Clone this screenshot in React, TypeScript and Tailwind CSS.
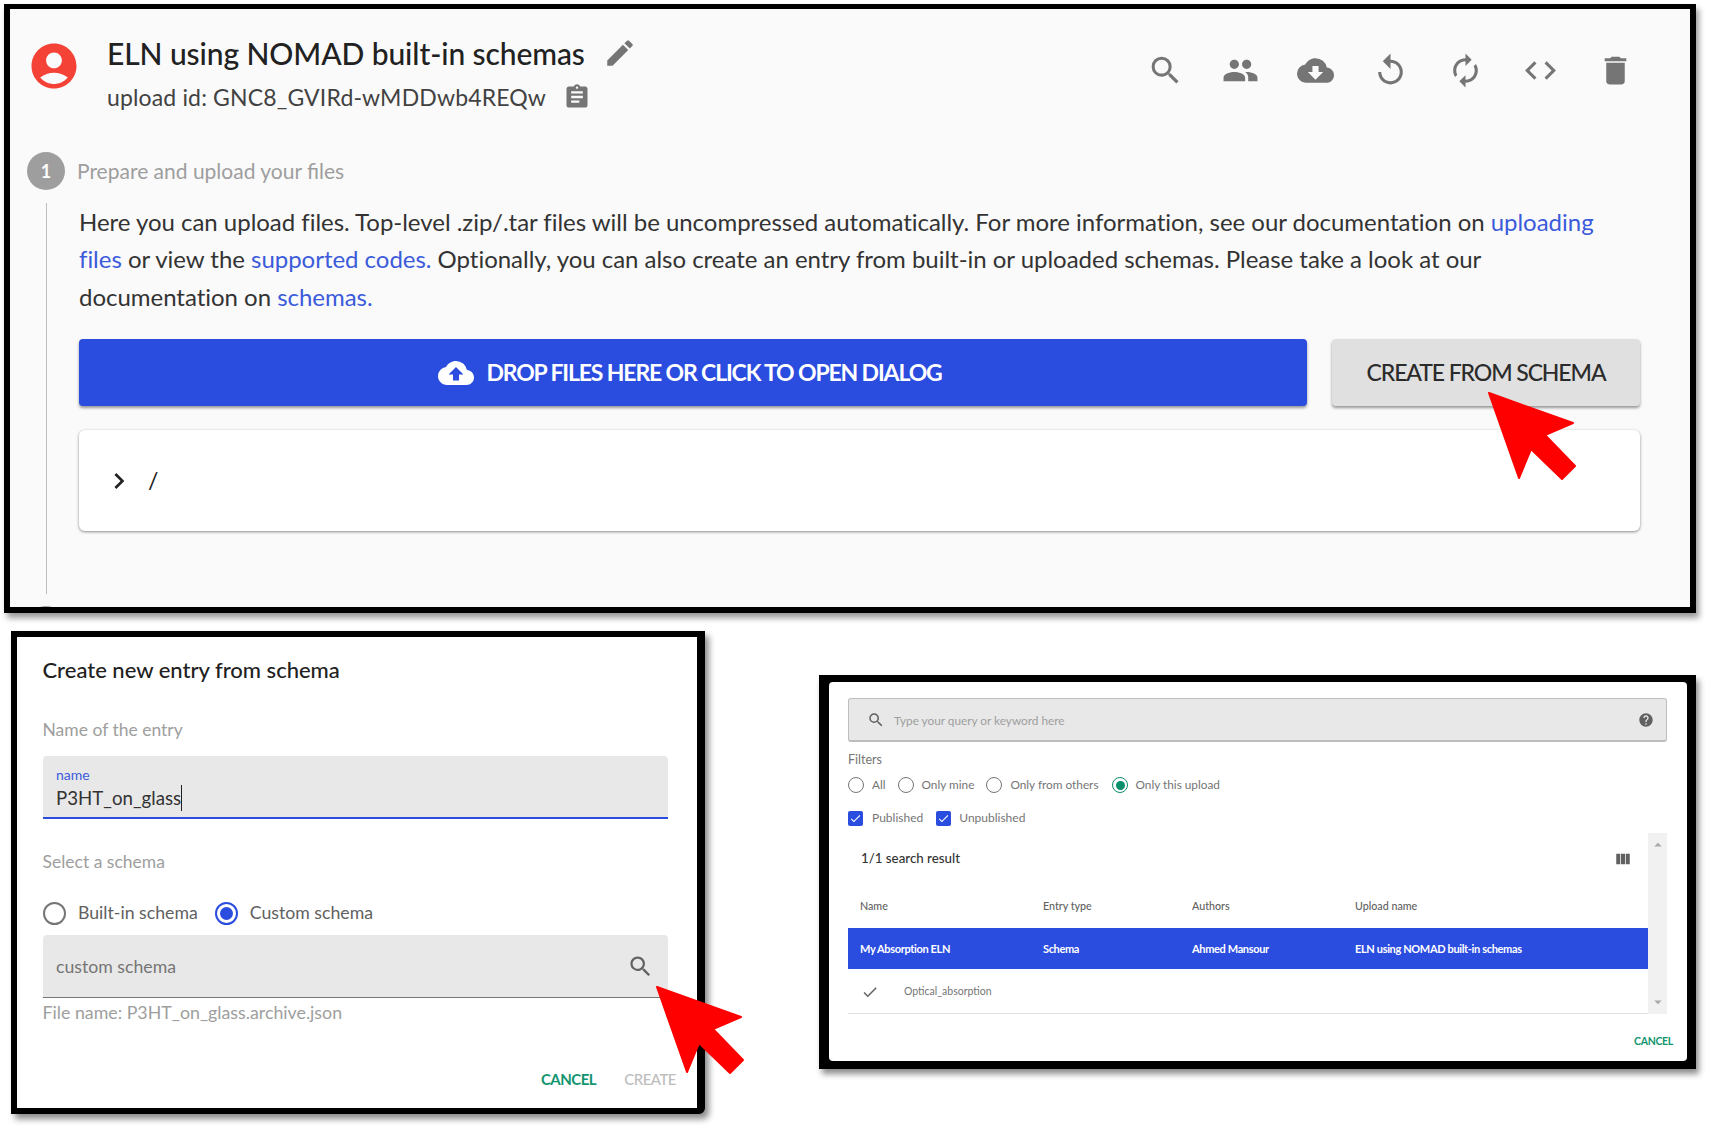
import React from 'react';
import {
  MdAccountCircle,
  MdAssignment,
  MdAutorenew,
  MdCheck,
  MdChevronRight,
  MdCloudDownload,
  MdCloudUpload,
  MdCode,
  MdDelete,
  MdEdit,
  MdHelp,
  MdPeople,
  MdReplay,
  MdSearch,
  MdViewColumn,
  MdArrowDropDown,
  MdArrowDropUp,
} from 'react-icons/md';

const toolbar = [MdSearch, MdPeople, MdCloudDownload, MdReplay, MdAutorenew, MdCode, MdDelete];

const Arrow = ({ className }: { className: string }) => (
  <svg className={`absolute ${className}`} width="92" height="92" viewBox="-3 -3 92 92">
    <path d="M0 0L84 30L56 42L86 73L73 86L42 56L30 85Z" fill="#ff0000" stroke="#ff0000" strokeWidth="2" strokeLinejoin="round" />
  </svg>
);

const BigRadio = ({ on }: { on?: boolean }) => (
  <span className={`flex h-[23px] w-[23px] items-center justify-center rounded-full border-2 ${on ? 'border-[#2a4cdf]' : 'border-[#757575]'}`}>
    {on && <span className="h-[13px] w-[13px] rounded-full bg-[#2a4cdf]" />}
  </span>
);

const SmallRadio = ({ on }: { on?: boolean }) => (
  <span className={`flex h-[16px] w-[16px] items-center justify-center rounded-full border ${on ? 'border-[#0a8f6c]' : 'border-[#757575]'}`}>
    {on && <span className="h-[9px] w-[9px] rounded-full bg-[#0a8f6c]" />}
  </span>
);

const Check = () => (
  <span className="flex h-[15px] w-[15px] items-center justify-center rounded-[2px] bg-[#2a4cdf]">
    <MdCheck className="text-white" size={13} />
  </span>
);

export default function App() {
  return (
    <div className="flex h-[1127px] w-[1709px] flex-col overflow-hidden bg-white pl-[4px] pr-[13px] pt-[4px] font-['Lato',sans-serif] text-[#212121]">
      {/* upload page */}
      <div className="relative h-[609px] w-[1692px] shrink-0 overflow-hidden border-[6px] border-t-[5px] border-black bg-[#fafafa] shadow-[3px_5px_6px_rgba(0,0,0,0.4)]">
        <div className="flex pl-[17px] pr-[56px] pt-[22px]">
          <MdAccountCircle size={54} className="mt-[8px] shrink-0 text-[#f44336]" />
          <div className="ml-[26px]">
            <div className="flex h-[44px] items-center">
              <span className="text-[30px] font-medium tracking-[-0.1px]">ELN using NOMAD built-in schemas</span>
              <MdEdit size={34} className="ml-[18px] text-[#757575]" />
            </div>
            <div className="flex h-[44px] items-center">
              <span className="text-[23px] tracking-[0.15px] text-[#424242]">upload id: GNC8_GVIRd-wMDDwb4REQw</span>
              <MdAssignment size={28} className="ml-[17px] text-[#757575]" />
            </div>
          </div>
          <div className="ml-auto mt-[21px] flex h-[38px] gap-[38px]">
            {toolbar.map((Icon, i) => (
              <Icon key={i} size={37} className="text-[#757575]" />
            ))}
          </div>
        </div>

        <div className="mt-[33px] flex items-center pl-[17px]">
          <span className="flex h-[38px] w-[38px] items-center justify-center rounded-full bg-[#9e9e9e] text-[18px] font-bold text-white">1</span>
          <span className="ml-[12px] text-[21px] text-[#9e9e9e]">Prepare and upload your files</span>
        </div>

        <div className="ml-[36px] mr-[50px] mt-[13px] h-[391px] border-l border-[#bdbdbd] pl-[32px]">
          <p className="text-[24px] leading-[37.4px] tracking-[-0.025px] text-[#333333]">
            Here you can upload files. Top-level .zip/.tar files will be uncompressed automatically. For more information, see our documentation on <a className="text-[#3b5bdb]">uploading</a>
            <br />
            <a className="text-[#3b5bdb]">files</a> or view the <a className="text-[#3b5bdb]">supported codes.</a> Optionally, you can also create an entry from built-in or uploaded schemas. Please take a look at our
            <br />
            documentation on <a className="text-[#3b5bdb]">schemas.</a>
          </p>
          <div className="mt-[24px] flex gap-[25px]">
            <div className="flex h-[67px] w-[1228px] items-center justify-center gap-[12px] rounded-[4px] bg-[#2a4cdf] pr-[6px] text-[23px] font-bold tracking-[-1.15px] text-white shadow-[0_2px_3px_rgba(0,0,0,0.4)]">
              <MdCloudUpload size={36} />
              DROP FILES HERE OR CLICK TO OPEN DIALOG
            </div>
            <div className="flex h-[67px] w-[308px] items-center justify-center rounded-[4px] bg-[#e0e0e0] text-[23px] font-medium tracking-[-1.1px] text-[#2b2b2b] shadow-[0_2px_3px_rgba(0,0,0,0.4)]">
              CREATE FROM SCHEMA
            </div>
          </div>
          <div className="mt-[24px] flex h-[101px] items-center rounded-[6px] bg-white pl-[24px] shadow-[0_1px_3px_rgba(0,0,0,0.45)]">
            <MdChevronRight size={32} className="text-[#212121]" />
            <span className="ml-[13px] text-[23px]">/</span>
          </div>
        </div>
        <div className="ml-[17px] mt-[12px] h-[38px] w-[38px] rounded-full bg-[#9e9e9e]" />
      </div>

      <div className="mt-[18px] flex items-start pl-[7px]">
        {/* create entry dialog */}
        <div className="h-[483px] w-[694px] shrink-0 rounded-br-[6px] border-[6px] border-r-[8px] border-black bg-white pl-[26px] pr-[21px] pt-[18px] shadow-[4px_5px_6px_rgba(0,0,0,0.45)]">
          <div className="-ml-[0.5px] text-[22px] font-medium leading-[30px]">Create new entry from schema</div>
          <div className="-ml-[0.5px] mt-[31px] text-[17.5px] leading-[28px] text-[#9e9e9e]">Name of the entry</div>
          <div className="mt-[12px] h-[63px] w-[625px] rounded-t-[4px] border-b-2 border-[#2a4cdf] bg-[#e8e8e8] pl-[13px] pt-[11px]">
            <div className="text-[14px] leading-[16px] text-[#3b5bdb]">name</div>
            <div className="mt-[2px] flex items-center text-[18.7px] leading-[24px] text-[#333333]">
              P3HT_on_glass
              <span className="h-[26px] w-px bg-[#212121]" />
            </div>
          </div>
          <div className="-ml-[0.5px] mt-[29px] text-[17.5px] leading-[28px] text-[#9e9e9e]">Select a schema</div>
          <div className="mt-[23px] flex h-[28px] items-center text-[17.7px] text-[#616161]">
            <BigRadio />
            <span className="ml-[12px]">Built-in schema</span>
            <span className="ml-[17px]">
              <BigRadio on />
            </span>
            <span className="ml-[12px]">Custom schema</span>
          </div>
          <div className="mt-[8px] flex h-[63px] w-[625px] items-center justify-between rounded-t-[4px] border-b border-[#757575] bg-[#e8e8e8] pl-[13px] pr-[14px]">
            <span className="mt-[3px] text-[17.7px] text-[#757575]">custom schema</span>
            <MdSearch size={27} className="text-[#616161]" />
          </div>
          <div className="-ml-[0.5px] mt-[1px] text-[17.8px] leading-[26px] text-[#9e9e9e]">File name: P3HT_on_glass.archive.json</div>
          <div className="mt-[42px] flex justify-end gap-[28px] text-[15px] font-bold leading-[24px] tracking-[-0.5px]">
            <span className="text-[#12946f]">CANCEL</span>
            <span className="font-medium text-[#bdbdbd]">CREATE</span>
          </div>
        </div>

        {/* schema search dialog */}
        <div className="ml-auto mt-[44px] h-[394px] w-[877px] shrink-0 border-[10px] border-b-[8px] border-r-[9px] border-t-[7px] border-black bg-black shadow-[3px_5px_6px_rgba(0,0,0,0.45)]">
          <div className="h-full rounded-[4px] bg-white pl-[19px] pr-[20px] pt-[16px]">
            <div className="flex h-[44px] items-center rounded-[3px] border border-b-2 border-[#bdbdbd] bg-[#e8e8e8] pl-[18px] pr-[12px]">
              <MdSearch size={18} className="text-[#616161]" />
              <span className="ml-[9px] mt-[2px] text-[11.8px] text-[#9e9e9e]">Type your query or keyword here</span>
              <MdHelp size={16} className="ml-auto text-[#616161]" />
            </div>
            <div className="mt-[9px] text-[12.5px] leading-[18px] text-[#757575]">Filters</div>
            <div className="mt-[6px] flex h-[20px] items-center text-[11.8px] text-[#757575]">
              <SmallRadio />
              <span className="ml-[8px]">All</span>
              <span className="ml-[12px]"><SmallRadio /></span>
              <span className="ml-[8px]">Only mine</span>
              <span className="ml-[12px]"><SmallRadio /></span>
              <span className="ml-[8px]">Only from others</span>
              <span className="ml-[14px]"><SmallRadio on /></span>
              <span className="ml-[7px]">Only this upload</span>
            </div>
            <div className="mt-[13px] flex h-[20px] items-center text-[12px] text-[#757575]">
              <Check />
              <span className="ml-[9px]">Published</span>
              <span className="ml-[13px]"><Check /></span>
              <span className="ml-[8px]">Unpublished</span>
            </div>
            <div className="mt-[5px] flex h-[181px]">
              <div className="flex-1 border-b border-[#e0e0e0] pt-[16px]">
                <div className="flex h-[20px] items-center justify-between pl-[13px] pr-[16px]">
                  <span className="text-[13.3px] font-medium text-[#333333]">1/1 search result</span>
                  <MdViewColumn size={18} className="text-[#616161]" />
                </div>
                <div className="mt-[29px] grid h-[16px] grid-cols-[182px_149px_163px_1fr] pl-[12px] text-[10.7px] font-medium leading-[16px] text-[#616161]">
                  <span>Name</span>
                  <span className="pl-px">Entry type</span>
                  <span className="pl-px">Authors</span>
                  <span className="pl-px">Upload name</span>
                </div>
                <div className="mt-[14px] grid h-[41px] grid-cols-[182px_149px_163px_1fr] items-center bg-[#2a4cdf] pl-[12px] pt-px text-[11px] font-bold tracking-[-0.35px] text-white">
                  <span>My Absorption ELN</span>
                  <span className="pl-px">Schema</span>
                  <span className="pl-px">Ahmed Mansour</span>
                  <span className="pl-px">ELN using NOMAD built-in schemas</span>
                </div>
                <div className="flex h-[44px] items-center pl-[13px] pt-px text-[10.5px] text-[#757575]">
                  <MdCheck size={18} className="text-[#616161]" />
                  <span className="ml-[25px]">Optical_absorption</span>
                </div>
              </div>
              <div className="flex w-[19px] flex-col items-center justify-between bg-[#f1f1f1] py-[3px] text-[#a8a8a8]">
                <MdArrowDropUp size={18} />
                <MdArrowDropDown size={18} />
              </div>
            </div>
            <div className="-mr-[6px] mt-[19px] text-right text-[10.5px] font-bold leading-[16px] tracking-[-0.3px] text-[#12946f]">CANCEL</div>
          </div>
        </div>
      </div>

      <Arrow className="left-[1486px] top-[390px]" />
      <Arrow className="left-[654px] top-[984px]" />
    </div>
  );
}
